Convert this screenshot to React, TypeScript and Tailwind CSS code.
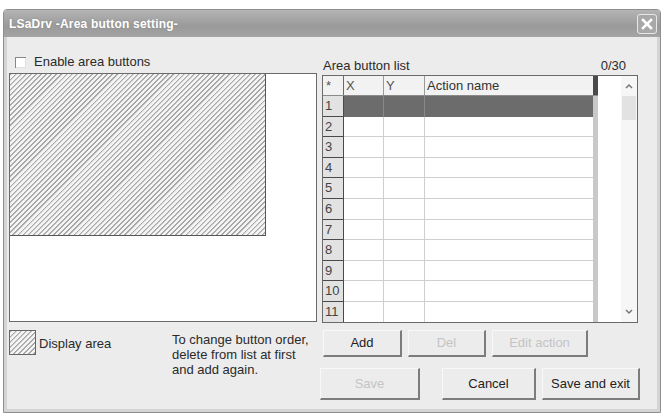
import React from 'react';

const font = "font-['Liberation_Sans',Arial,sans-serif]";

const hatch =
  'bg-[repeating-linear-gradient(135deg,#a8a8a8_0px,#a8a8a8_1px,#f4f4f4_1.6px,#f4f4f4_3.6px)]';

const WinButton = ({ label, disabled, w }: { label: string; disabled?: boolean; w: string }) => (
  <button
    className={`${w} h-full bg-[#ececec] border-t border-l border-t-[#f8f8f8] border-l-[#f8f8f8] border-r-2 border-b-2 border-r-[#7c7c7c] border-b-[#7c7c7c] text-[13px] ${
      disabled ? 'text-[#c4c4c4]' : 'text-[#222]'
    }`}
  >
    {label}
  </button>
);

const rows = Array.from({ length: 11 }, (_, i) => i + 1);

const App = () => {
  return (
    <div className={`w-[664px] h-[417px] bg-white pt-[9px] pl-[3px] ${font}`}>
      <div className="w-[658px] h-[404px] flex flex-col border border-[#8e8e8e] rounded-t-[4px] bg-[#ececec] overflow-hidden">
        {/* Title bar */}
        <div className="h-[27px] flex items-center justify-between pl-[5px] pr-[3px] bg-[linear-gradient(180deg,#b4b4b4,#9a9a9a_60%,#a4a4a4)]">
          <span className="text-[12px] font-bold text-white tracking-[0.2px] [text-shadow:0_0_2px_#888]">
            LSaDrv -Area button setting-
          </span>
          <div className="w-[20px] h-[20px] rounded-[3px] border border-[#e8e8e8] bg-[#a8a8a8] flex items-center justify-center">
            <svg width="12" height="12" viewBox="0 0 12 12">
              <path d="M2 2 L10 10 M10 2 L2 10" stroke="#fff" strokeWidth="2.6" strokeLinecap="square" />
            </svg>
          </div>
        </div>

        {/* Body */}
        <div className="flex-1 flex gap-[3px] pl-[2px] pt-[12px] border-x-[3px] border-b-[3px] border-[#d4d4d4] bg-[#ececec]">
          {/* Left column */}
          <div className="w-[308px] flex flex-col">
            <div className="h-[24px] flex items-center pl-[6px] gap-[8px] pt-[2px]">
              <div className="w-[11px] h-[11px] bg-white border-t border-l border-[#888] shadow-[inset_-1px_-1px_0_#e0e0e0]" />
              <span className="text-[13px] text-[#2a2a2a]">Enable area buttons</span>
            </div>
            <div className="h-[249px] border border-[#6a6a6a] bg-white">
              <div className={`w-[256px] h-[162px] border-r border-b border-[#555] ${hatch}`} />
            </div>
            <div className="flex mt-[8px]">
              <div className="flex items-start gap-[3px] w-[163px]">
                <div className={`w-[27px] h-[25px] border border-[#666] ${hatch}`} />
                <span className="text-[13px] text-[#2a2a2a] mt-[4px]">Display area</span>
              </div>
              <p className="text-[13px] leading-[15px] text-[#2a2a2a] mt-[2px]">
                To change button order,
                <br />
                delete from list at first
                <br />
                and add again.
              </p>
            </div>
          </div>

          {/* Right column */}
          <div className="w-[322px] flex flex-col">
            <div className="h-[26px] flex items-end justify-between pl-[3px] pr-[16px] text-[13px] text-[#2a2a2a]">
              <span>Area button list</span>
              <span>0/30</span>
            </div>
            <div className="ml-[2px] w-[316px] h-[248px] border border-[#6a6a6a] bg-white flex overflow-hidden">
              <div className="w-[275px] flex flex-col">
                {/* header */}
                <div className="h-[20px] flex shrink-0 text-[13px] text-[#555] bg-[#f2f2f2] border-b border-[#8a8a8a]">
                  <div className="w-[21px] border-r border-[#6a6a6a] pl-[3px] leading-[20px]">*</div>
                  <div className="w-[40px] border-r border-[#9a9a9a] pl-[2px] leading-[20px]">X</div>
                  <div className="w-[41px] border-r border-[#9a9a9a] pl-[2px] leading-[20px]">Y</div>
                  <div className="w-[168px] pl-[2px] leading-[20px] text-[#333]">Action name</div>
                  <div className="w-[5px] bg-[#4a4a4a]" />
                </div>
                {rows.map((r) => (
                  <div key={r} className="h-[20.6px] flex shrink-0 text-[13px]">
                    <div className="w-[21px] bg-[#e2e2e2] border-r border-b border-[#4a4a4a] pl-[2px] leading-[20px] text-[#444]">
                      {r}
                    </div>
                    {r === 1 ? (
                      <>
                        <div className="w-[40px] bg-[#6c6c6c] border-r border-[#888]" />
                        <div className="w-[41px] bg-[#6c6c6c] border-r border-[#888]" />
                        <div className="w-[168px] bg-[#6c6c6c]" />
                      </>
                    ) : (
                      <>
                        <div className="w-[40px] border-r border-b border-[#cfcfcf]" />
                        <div className="w-[41px] border-r border-b border-[#cfcfcf]" />
                        <div className="w-[168px] border-b border-[#cfcfcf]" />
                      </>
                    )}
                    <div className="w-[5px] bg-[#c8c8c8]" />
                  </div>
                ))}
              </div>
              <div className="w-[23px]" />
              {/* scrollbar */}
              <div className="w-[16px] flex flex-col bg-[#f6f6f6]">
                <div className="h-[20px] flex items-center justify-center">
                  <svg width="8" height="6" viewBox="0 0 8 6">
                    <path d="M1 5 L4 2 L7 5" stroke="#777" strokeWidth="1.5" fill="none" />
                  </svg>
                </div>
                <div className="h-[24px] mx-[1px] bg-[#e2e2e2]" />
                <div className="flex-1" />
                <div className="h-[20px] flex items-center justify-center">
                  <svg width="8" height="6" viewBox="0 0 8 6">
                    <path d="M1 1 L4 4 L7 1" stroke="#777" strokeWidth="1.5" fill="none" />
                  </svg>
                </div>
              </div>
            </div>
            <div className="h-[27px] mt-[7px] ml-[3px] flex gap-[6px]">
              <WinButton label="Add" w="w-[79px]" />
              <WinButton label="Del" w="w-[78px]" disabled />
              <WinButton label="Edit action" w="w-[96px]" disabled />
            </div>
            <div className="h-[32px] mt-[11px] flex">
              <WinButton label="Save" w="w-[100px]" disabled />
              <div className="w-[22px]" />
              <WinButton label="Cancel" w="w-[94px]" />
              <div className="w-[6px]" />
              <WinButton label="Save and exit" w="w-[98px]" />
            </div>
          </div>
        </div>
      </div>
    </div>
  );
};

export default App;
